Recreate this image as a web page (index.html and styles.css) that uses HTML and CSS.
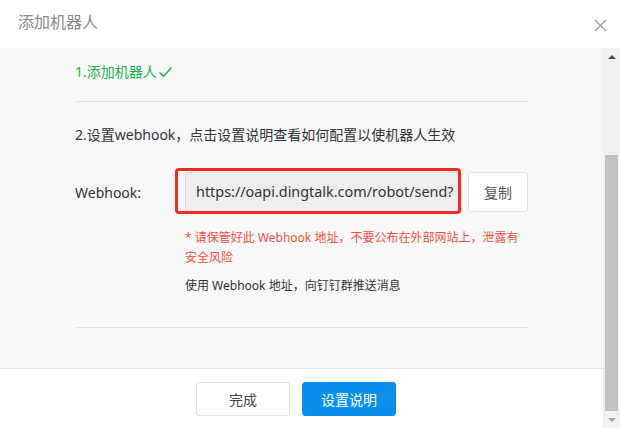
FILE: index.html
```html
<!DOCTYPE html>
<html lang="zh-CN">
<head>
<meta charset="utf-8">
<link rel="stylesheet" href="styles.css">
</head>
<body>
<div class="dialog">
  <div class="header">
    <span class="title">添加机器人</span>
    <svg class="close" width="13" height="13" viewBox="0 0 13 13"><path d="M1 1 L12 12 M12 1 L1 12" stroke="#9a9a9a" stroke-width="1.2" fill="none"/></svg>
  </div>
  <div class="main">
    <div class="col">
      <div class="body">
        <div class="step1">1.添加机器人<svg class="check" width="15" height="12" viewBox="0 0 15 12"><path d="M1.5 6.5 L5.5 10.2 L13.5 1.5" stroke="#1ab35a" stroke-width="1.6" fill="none"/></svg></div>
        <div class="divider first"></div>
        <div class="step2">2.设置webhook，点击设置说明查看如何配置以使机器人生效</div>
        <div class="row">
          <div class="label">Webhook:</div>
          <div class="input-wrap">
            <div class="input">https://oapi.dingtalk.com/robot/send?</div>
            <div class="highlight"></div>
          </div>
          <div class="copy">复制</div>
        </div>
        <div class="warn">* 请保管好此 Webhook 地址，不要公布在外部网站上，泄露有安全风险</div>
        <div class="usage">使用 Webhook 地址，向钉钉群推送消息</div>
        <div class="divider last"></div>
      </div>
      <div class="footer">
        <div class="btn">完成</div>
        <div class="btn primary">设置说明</div>
      </div>
    </div>
    <div class="scrollbar">
      <div class="arrow up"></div>
      <div class="track"><div class="thumb"></div></div>
      <div class="arrow down"></div>
    </div>
  </div>
</div>
</body>
</html>
```
FILE: styles.css
```css
html, body {
  margin: 0;
  padding: 0;
  background: #ffffff;
}
body {
  font-family: "Noto Sans", "Noto Sans CJK SC", sans-serif;
  color: #333333;
  width: 620px;
  height: 428px;
  overflow: hidden;
}
.dialog {
  width: 620px;
  height: 428px;
  display: flex;
  flex-direction: column;
}
.header {
  height: 48px;
  flex: none;
  display: flex;
  align-items: center;
  justify-content: space-between;
  padding: 0 13px 0 18px;
  box-sizing: border-box;
}
.title {
  font-size: 16px;
  color: #888888;
  line-height: 20px;
  margin-top: -4px;
}
.close {
  margin-top: 2px;
}
.main {
  flex: 1;
  display: flex;
  min-height: 0;
}
.col {
  flex: 1;
  display: flex;
  flex-direction: column;
}
.body {
  background: #f8f8f8;
  height: 320px;
  box-sizing: border-box;
  padding: 14px 75px 0 75px;
  font-size: 14px;
}
.step1 {
  line-height: 20px;
  color: #19b352;
  display: flex;
  align-items: center;
}
.check {
  margin-left: 1px;
}
.divider {
  height: 1px;
  background: #e3e3e3;
}
.divider.first {
  margin-top: 19px;
}
.divider.last {
  margin-top: 31px;
}
.step2 {
  margin-top: 23px;
  line-height: 20px;
}
.row {
  margin-top: 27px;
  display: flex;
  align-items: center;
  height: 40px;
}
.label {
  width: 110px;
  flex: none;
}
.input-wrap {
  position: relative;
  width: 277px;
  height: 40px;
  flex: none;
}
.input {
  box-sizing: border-box;
  height: 40px;
  background: #eeeeee;
  border: 1px solid #dadada;
  border-radius: 3px;
  padding: 0 8px 0 10px;
  line-height: 38px;
  font-size: 14.4px;
  white-space: nowrap;
  overflow: hidden;
  color: #333;
}
.highlight {
  position: absolute;
  left: -10px;
  top: -4px;
  width: 286px;
  height: 46px;
  box-sizing: border-box;
  border: 3px solid #f52a1f;
  border-radius: 4px;
}
.copy {
  margin-left: 6px;
  width: 60px;
  height: 40px;
  box-sizing: border-box;
  background: #ffffff;
  border: 1px solid #e2e2e2;
  border-radius: 3px;
  display: flex;
  align-items: center;
  justify-content: center;
  color: #555555;
}
.warn {
  margin-top: 16px;
  margin-left: 110px;
  font-size: 12px;
  line-height: 20px;
  color: #f5503f;
}
.usage {
  margin-top: 8px;
  margin-left: 110px;
  font-size: 12px;
  line-height: 20px;
}
.footer {
  flex: 1;
  border-top: 1px solid #e4e4e4;
  background: #ffffff;
  display: flex;
  gap: 12px;
  padding: 13px 0 0 196px;
  box-sizing: border-box;
}
.btn {
  width: 94px;
  height: 34px;
  box-sizing: border-box;
  border: 1px solid #e0e0e0;
  border-radius: 3px;
  display: flex;
  align-items: center;
  justify-content: center;
  font-size: 14px;
  color: #444444;
  background: #ffffff;
}
.btn.primary {
  background: #0a8fee;
  border-color: #0a8fee;
  color: #ffffff;
}
.scrollbar {
  width: 17px;
  flex: none;
  background: #f1f1f1;
  display: flex;
  flex-direction: column;
  align-items: center;
}
.arrow {
  height: 17px;
  width: 17px;
  flex: none;
  display: flex;
  align-items: center;
  justify-content: center;
}
.arrow::before {
  content: "";
  width: 0;
  height: 0;
  border-left: 4px solid transparent;
  border-right: 4px solid transparent;
}
.arrow.up::before {
  border-bottom: 4px solid #505050;
}
.arrow.down::before {
  border-top: 4px solid #a3a3a3;
}
.track {
  flex: 1;
  width: 17px;
  display: flex;
  flex-direction: column;
  padding-top: 90px;
  box-sizing: border-box;
}
.thumb {
  margin: 0 2px;
  height: 256px;
  background: #c1c1c1;
}
```
